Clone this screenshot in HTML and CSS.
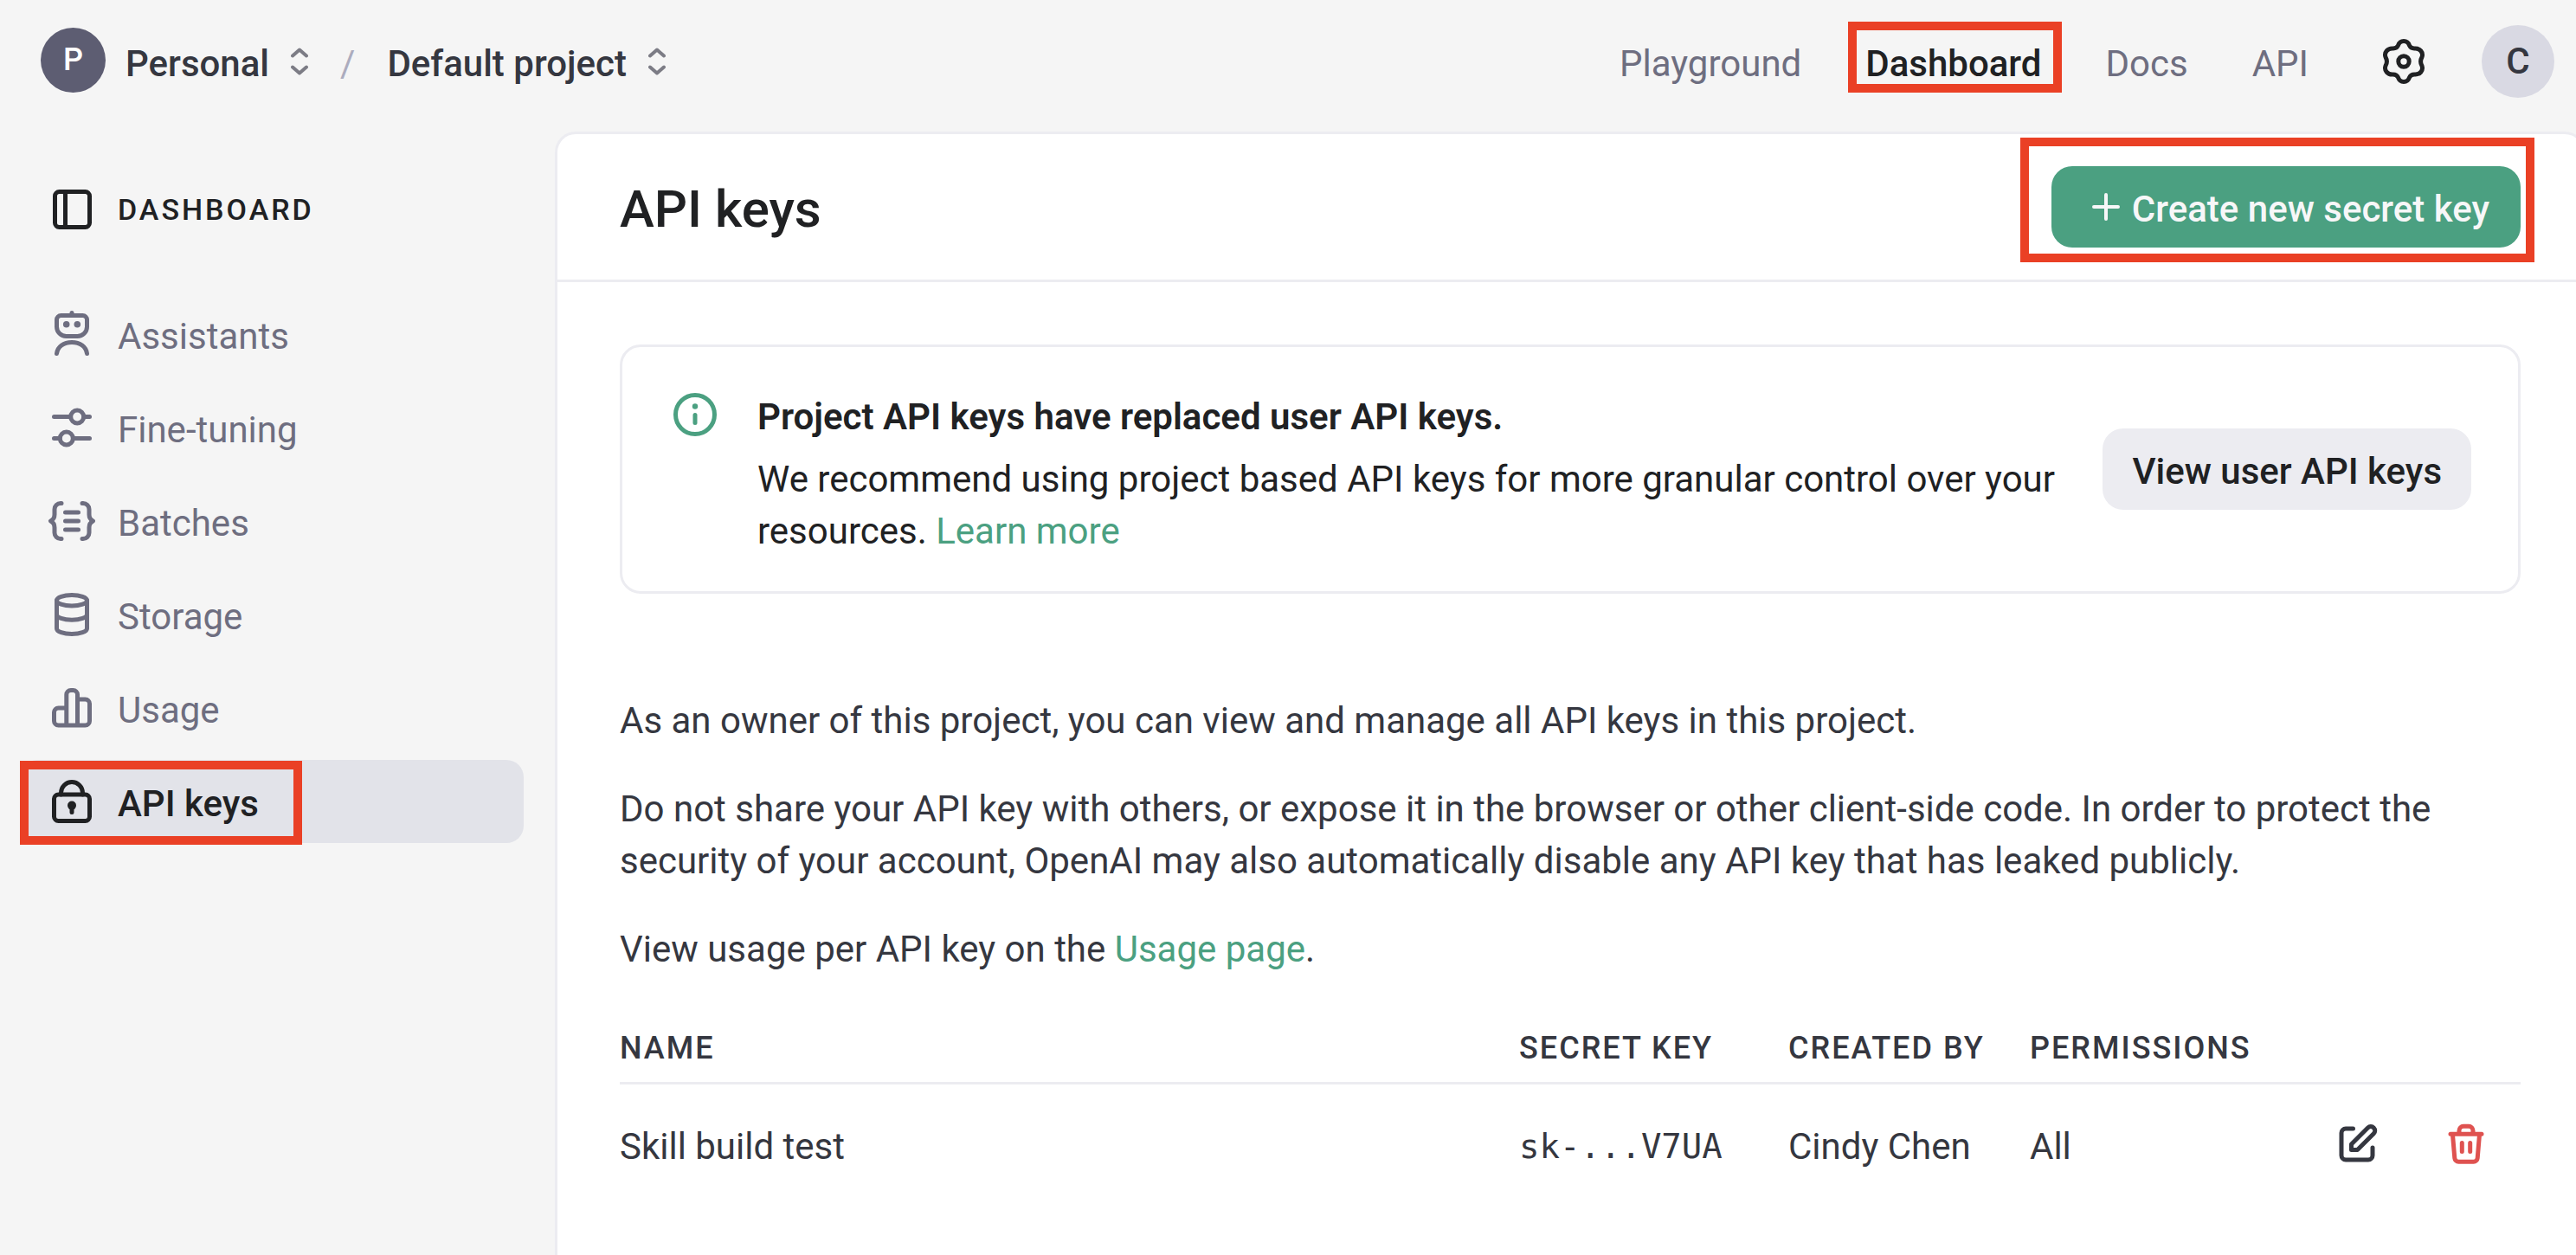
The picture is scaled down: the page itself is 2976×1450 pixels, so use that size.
FILE: index.html
```html
<!DOCTYPE html>
<html lang="en">
<head>
  <meta charset="utf-8">
  <meta name="viewport" content="width=device-width, initial-scale=1">
  <title>API keys</title>
  <link rel="stylesheet" href="styles.css">
</head>
<body>
  <header class="topbar">
    <div class="breadcrumb">
      <span class="avatar avatar-org">P</span>
      <button class="switcher" type="button">
        <span class="label">Personal</span>
        <svg class="chevrons" viewBox="0 0 20 32" aria-hidden="true"><path d="M2 9.500 10 2.500l8 7M2 22.500l8 7 8-7"/></svg>
      </button>
      <span class="slash label">/</span>
      <button class="switcher" type="button">
        <span class="label">Default project</span>
        <svg class="chevrons" viewBox="0 0 20 32" aria-hidden="true"><path d="M2 9.500 10 2.500l8 7M2 22.500l8 7 8-7"/></svg>
      </button>
    </div>
    <nav class="topnav" aria-label="Main">
      <div class="topnav-links">
        <a class="label" href="#playground">Playground</a>
        <a class="label current" href="#dashboard">Dashboard<span class="marker marker-nav"></span></a>
        <a class="label" href="#docs">Docs</a>
        <a class="label" href="#api">API</a>
      </div>
      <button class="icon-button gear" type="button" aria-label="Settings">
        <svg class="icon" viewBox="0 0 60 60" aria-hidden="true"><path d="M30 6.500c3.500 0 5.500 2 6.500 5 1.200 2.500 3 3.600 6 3.500 6-.5 10.500 4.500 8.500 10-2 3.500-2 6.500 0 10 2 5.500-2.500 10.500-8.500 10-3-.1-4.800 1-6 3.500-1 3-3 5-6.500 5s-5.500-2-6.500-5c-1.200-2.500-3-3.600-6-3.500-6 .5-10.500-4.500-8.500-10 2-3.500 2-6.500 0-10-2-5.500 2.500-10.500 8.500-10 3 .1 4.800-1 6-3.500 1-3 3-5 6.500-5z"/><circle cx="30" cy="30" r="6.200"/></svg>
      </button>
      <button class="avatar avatar-user" type="button" aria-label="Account">C</button>
    </nav>
  </header>

  <div class="layout">
    <aside class="sidebar">
      <h2 class="sidebar-title">
        <svg class="icon" viewBox="0 0 60 60" aria-hidden="true"><rect x="10.500" y="9.500" width="40" height="41" rx="5"/><path d="M22.500 10v40"/></svg>
        Dashboard
      </h2>
      <nav class="sidenav" aria-label="Dashboard">
        <a href="#assistants">
          <svg class="icon" viewBox="0 0 60 60" aria-hidden="true"><path d="M17.500 8.500h25a5 5 0 0 1 5 5v8a11 11 0 0 1-11 11h-13a11 11 0 0 1-11-11v-8a5 5 0 0 1 5-5zM30 5.500v3M12.500 52.500c1-8 8-13 17.500-13s16.500 5 17.500 13"/><circle class="solid" cx="23.700" cy="18.700" r="3.800"/><circle class="solid" cx="36.300" cy="18.700" r="3.800"/></svg>
          <span class="label">Assistants</span>
        </a>
        <a href="#fine-tuning">
          <svg class="icon" viewBox="0 0 60 60" aria-hidden="true"><path d="M9.500 17.500h19M44 17.500h6.500M9.500 42.500H16M31.500 42.500h19"/><circle cx="36.200" cy="17.500" r="7.500"/><circle cx="23.800" cy="42.500" r="7.500"/></svg>
          <span class="label">Fine-tuning</span>
        </a>
        <a href="#batches">
          <svg class="icon" viewBox="0 0 60 60" aria-hidden="true"><path d="M18 9.500h-1a7 7 0 0 0-7 7v6c0 4-1.500 6-4.500 7.500C8.500 31.500 10 33.500 10 37.500v6a7 7 0 0 0 7 7h1M42 9.500h1a7 7 0 0 1 7 7v6c0 4 1.500 6 4.500 7.500-3 1.500-4.500 3.500-4.500 7.500v6a7 7 0 0 1-7 7h-1M22.500 20h15M22.500 30h15M22.500 40h15"/></svg>
          <span class="label">Batches</span>
        </a>
        <a href="#storage">
          <svg class="icon" viewBox="0 0 60 60" aria-hidden="true"><ellipse cx="30" cy="13.700" rx="17.500" ry="6.200"/><path d="M12.500 13.700v32.500c0 3.500 7.800 6.300 17.500 6.300s17.500-2.800 17.500-6.300V13.700M12.500 30c0 3.500 7.800 6.200 17.500 6.200S47.500 33.500 47.500 30"/></svg>
          <span class="label">Storage</span>
        </a>
        <a href="#usage">
          <svg class="icon" viewBox="0 0 60 60" aria-hidden="true"><path d="M23.800 50V14.500a5 5 0 0 1 5-5h2.700a5 5 0 0 1 5 5V50M23.800 30h-9.300a5 5 0 0 0-5 5v10a5 5 0 0 0 5 5h31a5 5 0 0 0 5-5V25a5 5 0 0 0-5-5h-9"/></svg>
          <span class="label">Usage</span>
        </a>
        <a class="active" href="#api-keys" aria-current="page">
          <svg class="icon" viewBox="0 0 60 60" aria-hidden="true"><rect x="9.500" y="22" width="41" height="30.500" rx="5"/><path d="M17.500 22v-2a12.500 12.500 0 0 1 25 0v2M30 36v6.500"/><circle class="solid" cx="30" cy="34.600" r="5"/></svg>
          <span class="label">API keys</span>
          <span class="marker marker-side"></span>
        </a>
      </nav>
    </aside>

    <main class="panel">
      <div class="panel-header">
        <h1>API keys</h1>
        <button class="button button-primary" type="button">
          <svg class="plus" viewBox="0 0 32 32" aria-hidden="true"><path d="M16 2v28M2 16h28"/></svg>
          <span class="label">Create new secret key</span>
          <span class="marker marker-create"></span>
        </button>
      </div>

      <div class="content">
        <section class="notice">
          <svg class="icon notice-icon" viewBox="0 0 60 60" aria-hidden="true"><circle cx="30" cy="30" r="22.500"/><circle class="solid" cx="30" cy="20.500" r="3.200"/><path d="M30 30.500v9"/></svg>
          <div class="notice-text">
            <h3>Project API keys have replaced user API keys.</h3>
            <p>We recommend using project based API keys for more granular control over your resources. <a href="#learn-more">Learn more</a></p>
          </div>
          <button class="button button-neutral" type="button"><span class="label">View user API keys</span></button>
        </section>

        <div class="prose">
          <p>As an owner of this project, you can view and manage all API keys in this project.</p>
          <p>Do not share your API key with others, or expose it in the browser or other client-side code. In order to protect the security of your account, OpenAI may also automatically disable any API key that has leaked publicly.</p>
          <p>View usage per API key on the <a href="#usage">Usage page</a>.</p>
        </div>

        <table class="keys">
          <colgroup><col><col class="col-key"><col class="col-creator"><col class="col-permissions"><col class="col-actions"></colgroup>
          <thead>
            <tr><th scope="col">Name</th><th scope="col">Secret key</th><th scope="col">Created by</th><th scope="col">Permissions</th><td></td></tr>
          </thead>
          <tbody>
            <tr>
              <td>Skill build test</td>
              <td class="secret">sk-...V7UA</td>
              <td>Cindy Chen</td>
              <td>All</td>
              <td class="actions-cell">
                <div class="actions">
                  <button class="icon-button" type="button" aria-label="Edit key">
                    <svg class="icon" viewBox="0 0 60 60" aria-hidden="true"><path d="M23.500 13H15a5 5 0 0 0-5 5v26a5 5 0 0 0 5 5h26a5 5 0 0 0 5-5v-9M21.500 37.500v-6.500l19-19a4.800 4.800 0 0 1 6.800 6.800L28.500 37.500z"/></svg>
                  </button>
                  <button class="icon-button delete" type="button" aria-label="Delete key">
                    <svg class="icon" viewBox="0 0 60 60" aria-hidden="true"><path d="M12 19.300h36M22 19v-3.700a5 5 0 0 1 5-5h6a5 5 0 0 1 5 5V19M14.500 20l2.300 27a4.500 4.500 0 0 0 4.500 4.200h17.400a4.500 4.500 0 0 0 4.500-4.200l2.300-27M25.300 29.500v10M34.700 29.500v10"/></svg>
                  </button>
                </div>
              </td>
            </tr>
          </tbody>
        </table>
      </div>
    </main>
  </div>
</body>
</html>
```
FILE: styles.css
```css
:root {
  --ink: #202123;
  --text: #353740;
  --muted: #6e6e80;
  --border: #ececf1;
  --green: #4ba081;
  --marker: #ea4025;
}

* { box-sizing: border-box; }

body {
  display: flex;
  flex-direction: column;
  min-height: 100vh;
  margin: 0;
  overflow-x: hidden;
  background: #f5f5f5;
  color: var(--text);
  font: 400 42px/60px Roboto, "Liberation Sans", sans-serif;
}

h1, h2, h3, p { margin: 0; }
a { color: inherit; text-decoration: none; }

button {
  padding: 0;
  border: 0;
  background: none;
  color: inherit;
  font: inherit;
  cursor: pointer;
}

/* Optical centring of text beside icons */
.label { padding-top: 6px; white-space: nowrap; }

.icon {
  display: block;
  flex: none;
  width: 60px;
  height: 60px;
}

.icon, .chevrons, .plus {
  fill: none;
  stroke: currentColor;
  stroke-width: 5;
  stroke-linecap: round;
  stroke-linejoin: round;
}

.icon .solid { fill: currentColor; stroke: none; }

/* Red call-out frames */
.marker {
  position: absolute;
  border: 10px solid var(--marker);
  pointer-events: none;
}

.marker-nav { inset: -13px -24px -3px -20px; }
.marker-side { inset: 1px auto -2px 0; width: 326px; }
.marker-create { inset: -33px -16px -17px -36px; }

/* Top bar */
.topbar {
  display: flex;
  align-items: center;
  justify-content: space-between;
  height: 142px;
  padding: 0 25px 0 47px;
}

.breadcrumb, .switcher, .topnav, .topnav-links { display: flex; align-items: center; }
.breadcrumb { gap: 37px; }
.switcher { gap: 25px; font-weight: 500; }

.avatar {
  display: flex;
  align-items: center;
  justify-content: center;
  border-radius: 50%;
  font-weight: 500;
}

.avatar-org {
  width: 75px;
  height: 75px;
  margin: 0 -14px 4px 0;
  background: #5d5d72;
  color: #fff;
  font-size: 36px;
}

.avatar-user { width: 84px; height: 84px; background: #d9d9e3; }
.chevrons { width: 20px; height: 32px; color: #7c7c85; stroke-width: 4; }
.slash { color: #acacbe; }

.topnav-links { gap: 74px; margin-right: 80px; color: var(--muted); }
.topnav-links .current { position: relative; color: var(--ink); font-weight: 500; }
.gear { margin-right: 60px; color: var(--ink); }

/* Page layout */
.layout {
  display: grid;
  grid-template-columns: 641px minmax(0, 1fr);
  flex: 1;
  padding-top: 10px;
}

.sidebar { padding: 60px 36px 60px 23px; }

.sidebar-title {
  display: flex;
  align-items: center;
  gap: 23px;
  margin-bottom: 66px;
  padding-left: 30px;
  color: var(--ink);
  font-size: 34px;
  font-weight: 500;
  letter-spacing: 3px;
  text-transform: uppercase;
}

.sidenav { display: flex; flex-direction: column; gap: 12px; }

.sidenav a {
  position: relative;
  display: flex;
  align-items: center;
  gap: 23px;
  height: 96px;
  padding: 0 30px;
  border-radius: 20px;
  color: var(--muted);
}

.sidenav .active { background: #e2e3e9; color: var(--ink); font-weight: 500; }

/* The panel's right edge runs just past the window */
.panel {
  margin-right: -11px;
  border: 3px solid var(--border);
  border-bottom: 0;
  border-radius: 24px 24px 0 0;
  background: #fff;
}

.panel-header {
  display: flex;
  align-items: center;
  justify-content: space-between;
  height: 171px;
  padding: 0 72px;
  border-bottom: 3px solid var(--border);
}

h1 { padding-top: 6px; color: var(--ink); font-size: 60px; font-weight: 500; }

.button {
  position: relative;
  display: flex;
  flex: none;
  align-items: center;
  height: 94px;
  padding: 0 36px;
  border-radius: 24px;
  font-weight: 500;
}

.button-primary { gap: 14px; padding-left: 47px; background: var(--green); color: #f7f7f8; }
.button-neutral { padding: 0 34px; background: var(--border); }
.plus { width: 32px; height: 32px; stroke-width: 4; }

.content { padding: 72px; }
.content a { color: var(--green); }

.notice {
  display: flex;
  align-items: center;
  padding: 0 54px;
  border: 3px solid var(--border);
  border-radius: 24px;
  color: var(--ink);
}

.notice-icon { align-self: flex-start; margin: 48px 42px 0 0; color: var(--green); }
.notice-text { flex: 1; padding: 51px 36px 39px 0; }
.notice h3 { margin-bottom: 12px; font-size: 42px; font-weight: 600; }

.prose { display: grid; gap: 42px; margin-top: 117px; }

/* Keys table */
.keys {
  width: 100%;
  margin-top: 54px;
  border-collapse: collapse;
  table-layout: fixed;
}

.col-key { width: 311px; }
.col-creator { width: 279px; }
.col-permissions { width: 300px; }
.col-actions { width: 267px; }

.keys th, .keys td { padding: 0; text-align: left; vertical-align: top; white-space: nowrap; }
.keys thead tr { border-bottom: 3px solid var(--border); }

.keys th {
  padding: 0 0 9px;
  font-size: 36px;
  font-weight: 500;
  letter-spacing: 2px;
  text-transform: uppercase;
}

.keys tbody td { padding-top: 42px; }
.keys tbody .actions-cell { padding-top: 38px; }
.keys .secret { font-family: "DejaVu Sans Mono", "Liberation Mono", monospace; font-size: 39px; }
.actions { display: flex; justify-content: flex-end; gap: 64px; padding-right: 33px; }
.delete { color: #df5250; }
```
